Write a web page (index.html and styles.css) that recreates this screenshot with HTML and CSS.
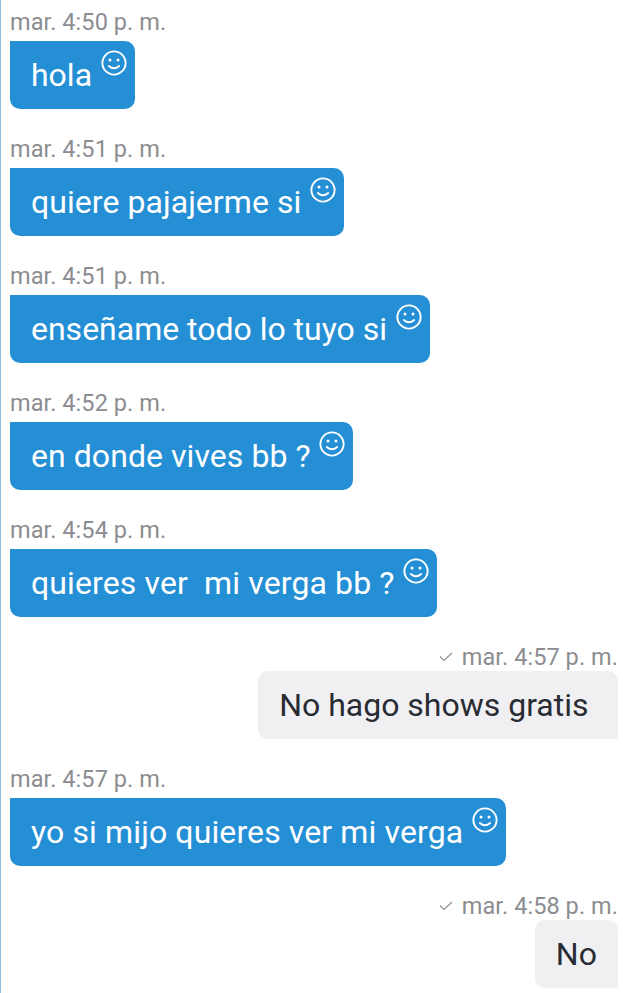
FILE: index.html
```
<!DOCTYPE html>
<html lang="es">
<head>
<meta charset="utf-8">
<title>Chat</title>
<link rel="stylesheet" href="styles.css">
</head>
<body>
<svg class="defs" width="0" height="0">
  <symbol id="smile" viewBox="0 0 26 26"><circle cx="13" cy="13" r="11.6" fill="none" stroke="currentColor" stroke-width="1.9"/><circle cx="9" cy="10" r="1.5" fill="currentColor"/><circle cx="17" cy="10" r="1.5" fill="currentColor"/><path d="M7.8 16Q13 20.5 18.2 16" fill="none" stroke="currentColor" stroke-width="1.8" stroke-linecap="round"/></symbol>
  <symbol id="check" viewBox="0 0 14 10"><path d="M1 4.5L5 8.5L13 1" fill="none" stroke="currentColor" stroke-width="1.1"/></symbol>
</svg>
<main class="chat">
  <section class="message"><time>mar. 4:50 p. m.</time><div class="bubble"><span class="text tight">hola</span><svg class="smile"><use href="#smile"/></svg></div></section>
  <section class="message"><time>mar. 4:51 p. m.</time><div class="bubble"><span class="text">quiere pajajerme si</span><svg class="smile"><use href="#smile"/></svg></div></section>
  <section class="message"><time>mar. 4:51 p. m.</time><div class="bubble"><span class="text tight">enseñame todo lo tuyo si</span><svg class="smile"><use href="#smile"/></svg></div></section>
  <section class="message"><time>mar. 4:52 p. m.</time><div class="bubble"><span class="text">en donde vives bb ?</span><svg class="smile"><use href="#smile"/></svg></div></section>
  <section class="message"><time>mar. 4:54 p. m.</time><div class="bubble"><span class="text wide">quieres ver  mi verga bb ?</span><svg class="smile"><use href="#smile"/></svg></div></section>
  <section class="message sent"><time><svg class="check"><use href="#check"/></svg>mar. 4:57 p. m.</time><div class="bubble"><span class="text tight">No hago shows gratis</span></div></section>
  <section class="message"><time>mar. 4:57 p. m.</time><div class="bubble"><span class="text wide">yo si mijo quieres ver mi verga</span><svg class="smile"><use href="#smile"/></svg></div></section>
  <section class="message sent last"><time><svg class="check"><use href="#check"/></svg>mar. 4:58 p. m.</time><div class="bubble"><span class="text">No</span></div></section>
</main>
</body>
</html>
```
FILE: styles.css
```
* { box-sizing: border-box; }
body { margin: 0; background: #fff; font-family: Roboto, sans-serif; overflow: hidden; }
.defs { position: absolute; }
.chat { height: 993px; padding: 3px 5px 0 9px; border-left: 1px solid #91bdda; }
.message { display: flex; flex-direction: column; align-items: flex-start; margin-bottom: 21px; }
.message time { display: flex; height: 38px; line-height: 39px; font-size: 23.5px; letter-spacing: 0.07px; color: #8b8d91; white-space: nowrap; }
.bubble { display: flex; height: 68px; padding: 0 8px 0 21px; border-radius: 0 10px 10px 10px; background: #258fd6; color: #fff; }
.text { font-size: 32px; line-height: 68px; letter-spacing: 0.06px; white-space: pre; }
.text.tight { letter-spacing: -0.01px; }
.text.wide { letter-spacing: 0.12px; }
.smile { width: 26px; height: 26px; margin: 8.5px 0 0 8.7px; }
.sent { align-items: flex-end; }
.message.sent time { height: 33px; }
.sent .bubble { padding: 0 29.5px 0 21px; border-radius: 10px 10px 0 10px; background: #f0f0f3; color: #292b33; }
.sent.last .bubble { padding-right: 21px; }
.check { width: 14px; height: 10px; margin: 14px 9px 0 0; }
```
